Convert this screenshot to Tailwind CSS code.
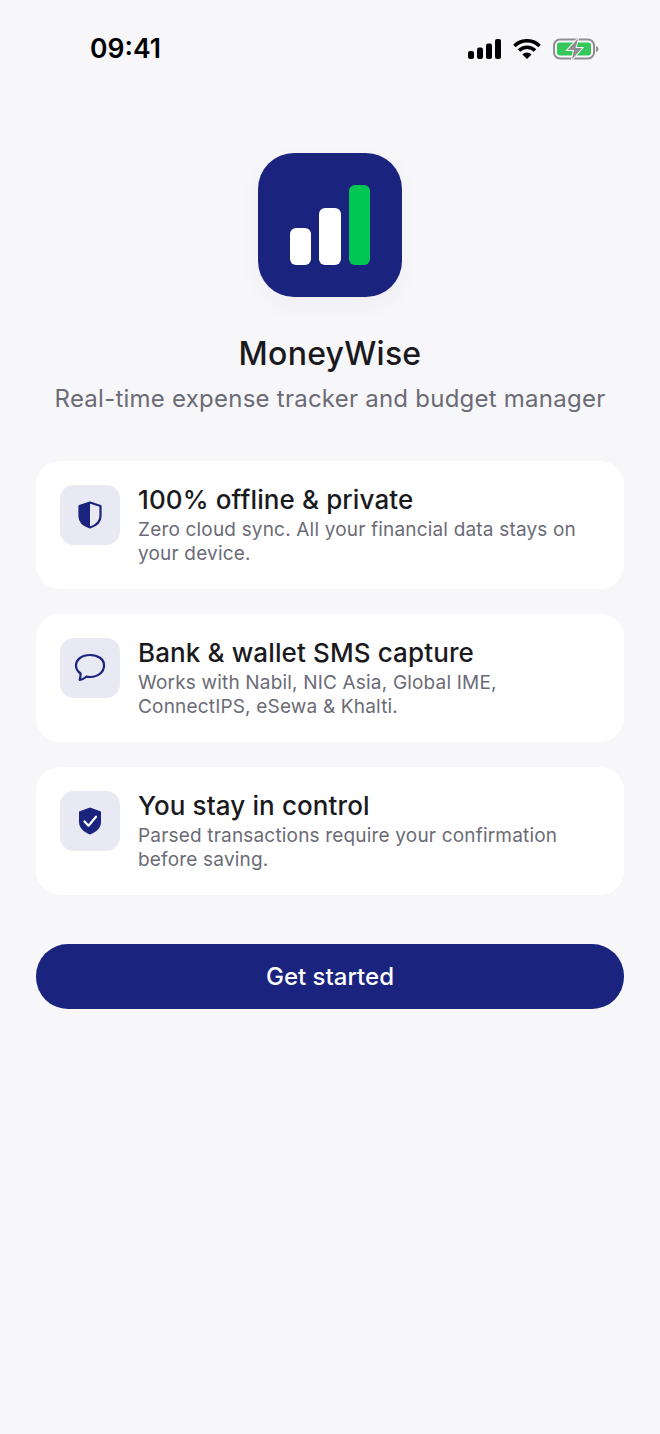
<!DOCTYPE html>
<html lang="en">
<head>
    <meta charset="UTF-8">
    <meta name="viewport" content="width=device-width, initial-scale=1.0">
    <title>MoneyWise</title>
    <script src="https://cdn.jsdelivr.net/npm/@tailwindcss/browser@4"></script>
</head>
<body class="bg-[#f7f7fa] font-['Inter',sans-serif] text-[#1a1a1e] h-[1434px] overflow-hidden">

    <!-- status bar -->
    <div class="flex items-center justify-between h-[98px] pl-[90px] pr-[61px]">
        <span class="text-[26.5px] font-semibold text-black">09:41</span>
        <div class="flex items-center gap-[12px]">
            <svg width="33" height="20" viewBox="0 0 33 20" fill="#000">
                <rect x="0" y="12" width="6" height="8" rx="2"/>
                <rect x="9" y="8.5" width="6" height="11.5" rx="2"/>
                <rect x="18" y="4.5" width="6" height="15.5" rx="2"/>
                <rect x="27" y="0" width="6" height="20" rx="2"/>
            </svg>
            <svg width="28" height="20" viewBox="0 0 28 20" fill="none" stroke="#000" stroke-width="3.6">
                <path d="M1.4 7a17.8 17.8 0 0 1 25.2 0"/>
                <path d="M6 11.6a11.2 11.2 0 0 1 16 0"/>
                <path d="M14 20 9.4 15.4a6.500 6.500 0 0 1 9.200 0z" fill="#000" stroke="none"/>
            </svg>
            <svg width="46" height="22" viewBox="0 0 46 22" fill="none">
                <rect x="1" y="1.500" width="40" height="19" rx="6" stroke="#8e8e93" stroke-width="2"/>
                <path d="M43 8v6c1.600-.5 2.500-1.600 2.500-3s-.9-2.500-2.500-3z" fill="#8e8e93"/>
                <rect x="4" y="4.500" width="34" height="13" rx="3" fill="#34c759"/>
                <path d="M25 .5 14.500 12h6.500l-2 9.500L29 10h-6.500z" fill="#8e8e93" stroke="#f7f7fa" stroke-width="2" paint-order="stroke"/>
            </svg>
        </div>
    </div>

    <!-- logo -->
    <div class="flex flex-col items-center pt-[55px]">
        <div class="w-[144px] h-[144px] rounded-[36px] bg-[#1a237e] flex items-end justify-center gap-[8px] pb-[32px] shadow-[0_8px_24px_rgba(26,35,126,0.04)]">
            <div class="w-[21.5px] h-[37px] rounded-[6px] bg-white"></div>
            <div class="w-[21.5px] h-[57px] rounded-[6px] bg-white"></div>
            <div class="w-[21.5px] h-[80px] rounded-[6px] bg-[#00c853]"></div>
        </div>
        <h1 class="mt-[37px] text-[32px] leading-[40px] font-medium tracking-[0.25px]">MoneyWise</h1>
        <p class="mt-[9px] text-[24px] leading-[32px] text-[#6b6b76] tracking-[0.24px]">Real-time expense tracker and budget manager</p>
    </div>

    <!-- feature cards -->
    <div class="flex flex-col gap-[25px] mx-[36px] mt-[46px]">
        <div class="flex gap-[18px] h-[128px] bg-white rounded-[24px] pt-[24px] pl-[24px] pr-[24px]">
            <div class="w-[60px] h-[60px] shrink-0 rounded-[14px] bg-[#e8e9f3] flex items-center justify-center">
                <svg width="24" height="28" viewBox="0 0 24 28">
                    <path d="M12 1.500 22.500 5v10c0 5.500-4.200 9.500-10.500 11.500C5.700 24.500 1.500 20.500 1.500 15V5z" fill="none" stroke="#1a237e" stroke-width="2.200" stroke-linejoin="round"/>
                    <path d="M12 1.500V26.500C5.700 24.500 1.500 20.500 1.500 15V5z" fill="#1a237e"/>
                </svg>
            </div>
            <div>
                <div class="text-[26px] leading-[30px] font-medium tracking-[0.12px]">100% offline &amp; private</div>
                <div class="text-[19px] leading-[24px] text-[#6b6b76] mt-[3px] tracking-[0.18px]">Zero cloud sync. All your financial data stays on your device.</div>
            </div>
        </div>

        <div class="flex gap-[18px] h-[128px] bg-white rounded-[24px] pt-[24px] pl-[24px] pr-[24px]">
            <div class="w-[60px] h-[60px] shrink-0 rounded-[14px] bg-[#e8e9f3] flex items-center justify-center">
                <svg width="32" height="30" viewBox="0 0 32 30" fill="none">
                    <path d="M16 2C8 2 2 6.500 2 12.500c0 3.200 1.700 6 4.600 8 0 2.200-.3 4-.9 6.500 2.600-.6 4.800-1.800 6.500-3.300 1.200.2 2.500.3 3.800.3 8 0 14-4.800 14-11.500S24 2 16 2z" stroke="#1a237e" stroke-width="2.200" stroke-linejoin="round"/>
                </svg>
            </div>
            <div>
                <div class="text-[26px] leading-[30px] font-medium tracking-[0.12px]">Bank &amp; wallet SMS capture</div>
                <div class="text-[19px] leading-[24px] text-[#6b6b76] mt-[3px] tracking-[0.18px]">Works with Nabil, NIC Asia, Global IME, ConnectIPS, eSewa &amp; Khalti.</div>
            </div>
        </div>

        <div class="flex gap-[18px] h-[128px] bg-white rounded-[24px] pt-[24px] pl-[24px] pr-[24px]">
            <div class="w-[60px] h-[60px] shrink-0 rounded-[14px] bg-[#e8e9f3] flex items-center justify-center">
                <svg width="24" height="28" viewBox="0 0 24 28">
                    <path d="M12 .500 23 4.500V15c0 5.800-4.500 10-11 12.500C5.500 25 1 20.800 1 15V4.500z" fill="#1a237e"/>
                    <path d="M6.500 14.500l4 4.200 7.500-9" fill="none" stroke="#fff" stroke-width="2.200" stroke-linecap="round" stroke-linejoin="round"/>
                </svg>
            </div>
            <div>
                <div class="text-[26px] leading-[30px] font-medium tracking-[0.12px]">You stay in control</div>
                <div class="text-[19px] leading-[24px] text-[#6b6b76] mt-[3px] tracking-[0.18px]">Parsed transactions require your confirmation before saving.</div>
            </div>
        </div>
    </div>

    <!-- button -->
    <button class="block w-[588px] h-[65px] mx-[36px] mt-[49px] rounded-[32px] bg-[#1a237e] text-white text-[24px] font-medium">Get started</button>

</body>
</html>
